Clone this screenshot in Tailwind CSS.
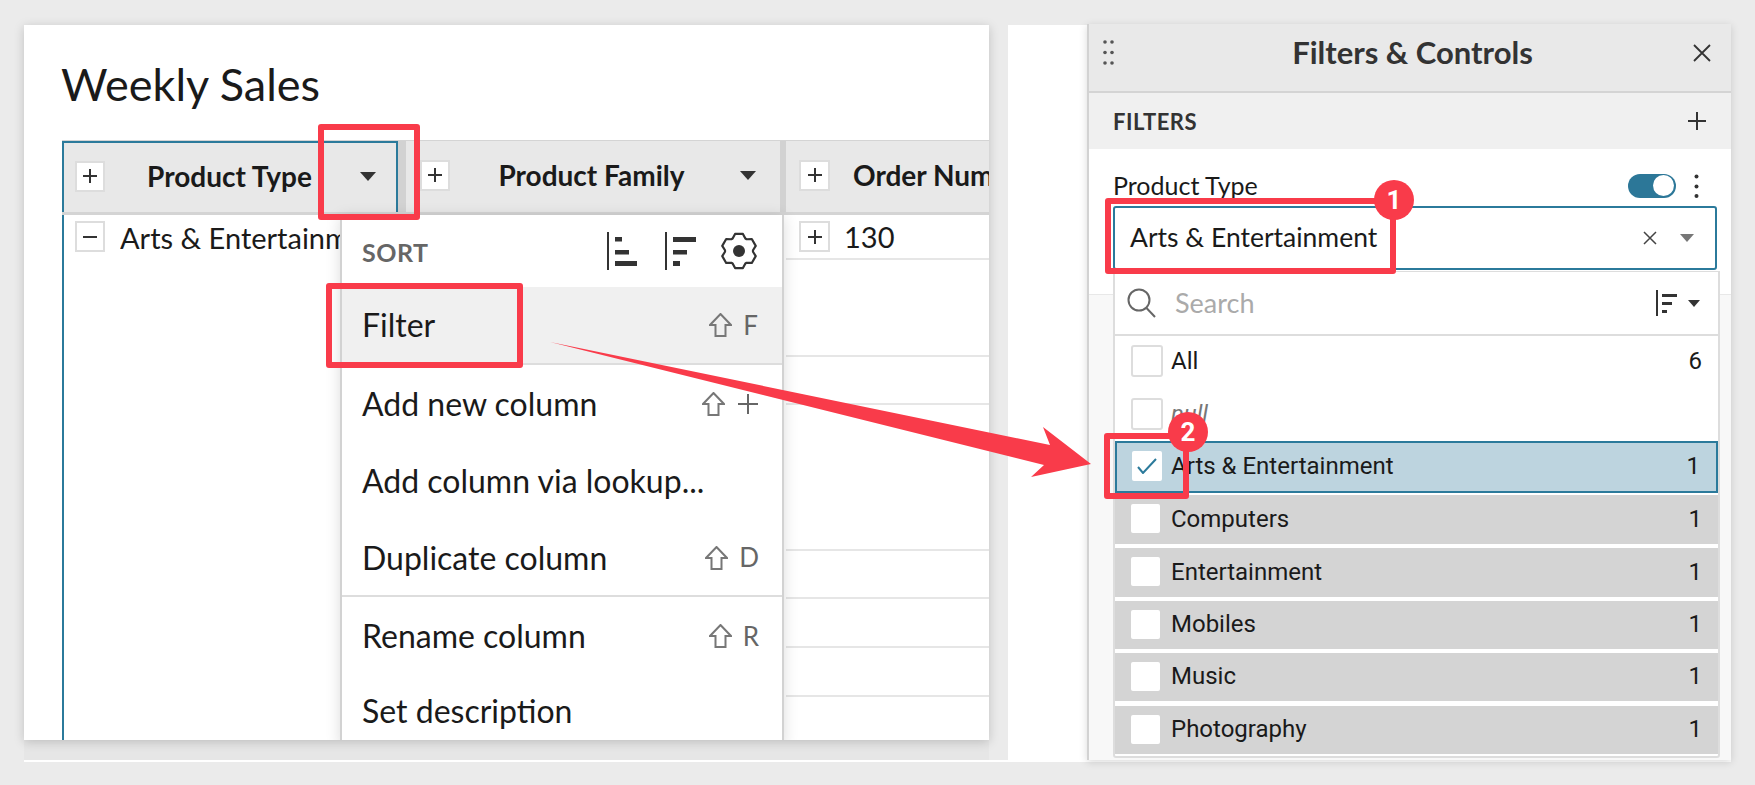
<!DOCTYPE html>
<html lang="en">
<head>
<meta charset="UTF-8" />
<title>Weekly Sales filter</title>
<script src="https://cdn.jsdelivr.net/npm/@tailwindcss/browser@4"></script>
</head>
<body class="bg-[#ebebeb] w-[1755px] h-[785px] overflow-hidden relative font-['Lato',sans-serif] text-[#1a1a1a]">
  <!-- screenshot base -->
  <div class="absolute left-[24px] top-[25px] w-[1707px] h-[737px] flex border-b-2 border-white bg-[#e6e6e6]">

    <!-- worksheet card -->
    <div class="w-[965px] h-[715px] bg-white shadow-[0_2px_10px_rgba(0,0,0,0.18)] pl-[38px] relative overflow-hidden shrink-0">
      <h1 class="h-[115px] pt-[27px] -ml-px text-[45px] leading-[64px] font-normal">Weekly Sales</h1>
      <div class="flex h-[600px]">
        <!-- column 1 -->
        <div class="w-[344px] shrink-0">
          <div class="h-[75px] flex border-t border-[#d4d4d4] border-b-[3px] bg-[#e8e8e8]">
            <div class="w-[336px] border-t-2 border-x-2 border-[#2b7a9b] flex items-center pl-[11px] pb-[3px]">
              <span class="w-[30px] h-[31px] bg-white border-2 border-[#ddd] flex items-center justify-center shrink-0"><svg width="16" height="16" viewBox="0 0 16 16"><path d="M8 1v14M1 8h14" stroke="#333" stroke-width="2"/></svg></span>
              <span class="ml-[42px] w-[165px] text-center text-[28px] font-bold whitespace-nowrap">Product Type</span>
              <svg class="ml-[48px]" width="16" height="9" viewBox="0 0 16 9"><path d="M0 0h16l-8 9z" fill="#333"/></svg>
            </div>
            <div class="w-[8px] bg-[#d2d2d2]"></div>
          </div>
          <div class="h-[525px] w-[336px] border-l-2 border-[#2b7a9b] pl-[11px] pt-[6px] flex items-start">
            <span class="w-[30px] h-[31px] bg-white border-2 border-[#ddd] flex items-center justify-center shrink-0"><svg width="16" height="16" viewBox="0 0 16 16"><path d="M1 8h14" stroke="#333" stroke-width="2"/></svg></span>
            <span class="ml-[15px] text-[29px] leading-[34px] whitespace-nowrap w-[221px] overflow-hidden">Arts &amp; Entertainment</span>
          </div>
        </div>
        <!-- column 2 -->
        <div class="w-[380px] shrink-0">
          <div class="h-[75px] flex border-t border-[#d4d4d4] border-b-[3px] bg-[#e8e8e8]">
            <div class="w-[374px] flex items-center pl-[14px] pb-[3px]">
              <span class="w-[30px] h-[31px] bg-white border-2 border-[#ddd] flex items-center justify-center shrink-0"><svg width="16" height="16" viewBox="0 0 16 16"><path d="M8 1v14M1 8h14" stroke="#333" stroke-width="2"/></svg></span>
              <span class="ml-[48px] w-[187px] text-center text-[28px] font-bold whitespace-nowrap">Product Family</span>
              <svg class="ml-[55px]" width="16" height="9" viewBox="0 0 16 9"><path d="M0 0h16l-8 9z" fill="#333"/></svg>
            </div>
            <div class="w-[6px] bg-[#d2d2d2]"></div>
          </div>
        </div>
        <!-- column 3 -->
        <div class="w-[203px] shrink-0 overflow-hidden">
          <div class="h-[75px] flex items-center border-t border-[#d4d4d4] border-b-[3px] bg-[#e8e8e8] pl-[13px] pb-[3px] whitespace-nowrap">
            <span class="w-[31px] h-[31px] bg-white border-2 border-[#ddd] flex items-center justify-center shrink-0"><svg width="16" height="16" viewBox="0 0 16 16"><path d="M8 1v14M1 8h14" stroke="#333" stroke-width="2"/></svg></span>
            <span class="ml-[23px] text-[28px] font-bold">Order Number</span>
          </div>
          <div class="h-[45px] flex items-center pl-[13px] border-b-2 border-[#e6e6e6]">
            <span class="w-[31px] h-[31px] bg-white border-2 border-[#ddd] flex items-center justify-center shrink-0"><svg width="16" height="16" viewBox="0 0 16 16"><path d="M8 1v14M1 8h14" stroke="#333" stroke-width="2"/></svg></span>
            <span class="ml-[14px] text-[29px]">130</span>
          </div>
          <div class="h-[97px] border-b-2 border-[#e6e6e6]"></div>
          <div class="h-[48px] border-b-2 border-[#e6e6e6]"></div>
          <div class="h-[146px] border-b-2 border-[#e6e6e6]"></div>
          <div class="h-[48px] border-b-2 border-[#e6e6e6]"></div>
          <div class="h-[49px] border-b-2 border-[#e6e6e6]"></div>
          <div class="h-[49px] border-b-2 border-[#e6e6e6]"></div>
        </div>
      </div>

      <!-- column menu -->
      <div class="absolute left-[316px] top-[190px] w-[444px] h-[530px] bg-white border-x-2 border-[#d2d2d2] shadow-[0_2px_14px_rgba(0,0,0,0.14)] text-[32px]">
        <div class="h-[72px] flex items-center pl-[20px] pr-[23px]">
          <span class="mt-[4px] text-[25px] font-bold text-[#666] tracking-[0.5px] flex-1">SORT</span>
          <svg width="30" height="38" viewBox="0 0 30 38" fill="#333"><rect x="0" y="0" width="2" height="38"/><rect x="8" y="5" width="7" height="4.5"/><rect x="8" y="18" width="14" height="4.5"/><rect x="8" y="29" width="22" height="5"/></svg>
          <svg class="ml-[28px]" width="31" height="38" viewBox="0 0 31 38" fill="#333"><rect x="0" y="0" width="2" height="38"/><rect x="8" y="5" width="23" height="5"/><rect x="8" y="18" width="14" height="4.5"/><rect x="8" y="29" width="7" height="5"/></svg>
          <svg class="ml-[23px]" width="40" height="40" viewBox="-20 -20 40 40"><polygon points="-6.36,-12.47 -3.94,-17.05 3.94,-17.05 6.36,-12.47 7.63,-11.74 12.8,-11.94 16.74,-5.12 13.98,-0.73 13.98,0.73 16.74,5.12 12.8,11.94 7.63,11.74 6.36,12.47 3.94,17.05 -3.94,17.05 -6.36,12.47 -7.63,11.74 -12.8,11.94 -16.74,5.12 -13.98,0.73 -13.98,-0.73 -16.74,-5.12 -12.8,-11.94 -7.63,-11.74" fill="none" stroke="#333" stroke-width="2.2" stroke-linejoin="round"/><circle r="6" fill="#333"/></svg>
        </div>
        <div class="h-[78px] flex items-center pl-[20px] pr-[24px] bg-[#f0f0f0] border-b-2 border-[#ddd]">
          <span class="flex-1">Filter</span>
          <svg width="23" height="24" viewBox="0 0 23 24"><path d="M11.5 1 22 12h-5.500v11h-10V12H1z" fill="none" stroke="#777" stroke-width="2"/></svg>
          <span class="ml-[11px] text-[26px] text-[#666]">F</span>
        </div>
        <div class="h-[77px] flex items-center pl-[20px] pr-[24px]">
          <span class="flex-1">Add new column</span>
          <svg width="23" height="24" viewBox="0 0 23 24"><path d="M11.500 1 22 12h-5.500v11h-10V12H1z" fill="none" stroke="#777" stroke-width="2"/></svg>
          <svg class="ml-[13px]" width="20" height="20" viewBox="0 0 20 20"><path d="M10 0v20M0 10h20" stroke="#666" stroke-width="2"/></svg>
        </div>
        <div class="h-[78px] flex items-center pl-[20px] pr-[24px]">
          <span class="flex-1">Add column via lookup...</span>
        </div>
        <div class="h-[77px] flex items-center pl-[20px] pr-[23px] border-b-2 border-[#ddd]">
          <span class="flex-1">Duplicate column</span>
          <svg width="23" height="24" viewBox="0 0 23 24"><path d="M11.500 1 22 12h-5.500v11h-10V12H1z" fill="none" stroke="#777" stroke-width="2"/></svg>
          <span class="ml-[11px] text-[26px] text-[#666]">D</span>
        </div>
        <div class="h-[78px] flex items-center pl-[20px] pr-[23px]">
          <span class="flex-1">Rename column</span>
          <svg width="23" height="24" viewBox="0 0 23 24"><path d="M11.500 1 22 12h-5.500v11h-10V12H1z" fill="none" stroke="#777" stroke-width="2"/></svg>
          <span class="ml-[11px] text-[26px] text-[#666]">R</span>
        </div>
        <div class="h-[72px] flex items-center pl-[20px] pr-[25px]">
          <span class="flex-1">Set description</span>
        </div>
      </div>
    </div>

    <div class="w-[19px] bg-[#ebebeb] shrink-0"></div>
    <div class="w-[79px] bg-white shrink-0"></div>

    <!-- filters panel -->
    <div class="w-[644px] h-[736px] -mt-px flex flex-col bg-[#f8f8f8] border-l-2 border-[#d2d2d2] shadow-[0_2px_8px_rgba(0,0,0,0.15)]">
      <div class="h-[69px] shrink-0 bg-[#e9e9e9] border-b-2 border-[#d4d4d4] flex items-center pl-[14px] pr-[20px] pb-[10px]">
        <svg width="11" height="25" viewBox="0 0 11 25" fill="#555"><circle cx="2" cy="2" r="1.800"/><circle cx="9" cy="2" r="1.800"/><circle cx="2" cy="12.500" r="1.800"/><circle cx="9" cy="12.500" r="1.800"/><circle cx="2" cy="23" r="1.800"/><circle cx="9" cy="23" r="1.800"/></svg>
        <span class="flex-1 text-center text-[31px] font-bold text-[#333] pl-[18px]">Filters &amp; Controls</span>
        <svg width="18" height="18" viewBox="0 0 18 18"><path d="M1 1l16 16M17 1 1 17" stroke="#333" stroke-width="1.800"/></svg>
      </div>
      <div class="h-[56px] shrink-0 bg-[#f0f0f0] flex items-center pl-[24px] pr-[25px]">
        <span class="flex-1 text-[22px] font-bold text-[#333] tracking-[0.5px]">FILTERS</span>
        <svg width="18" height="18" viewBox="0 0 18 18"><path d="M9 0v18M0 9h18" stroke="#333" stroke-width="2"/></svg>
      </div>
      <div class="h-[146px] shrink-0 bg-white border-b border-[#e8e8e8] pl-[24px] pr-[32px] pt-[20px]">
        <div class="h-[33px] flex items-center">
          <span class="flex-1 text-[25px]">Product Type</span>
          <span class="w-[48px] h-[24px] rounded-full bg-[#2c7798] flex items-center justify-end pr-[2px]"><span class="w-[21px] h-[21px] rounded-full bg-white"></span></span>
          <svg class="ml-[18px]" width="5" height="24" viewBox="0 0 5 24" fill="#333"><circle cx="2.500" cy="2.500" r="2"/><circle cx="2.500" cy="12.500" r="2"/><circle cx="2.500" cy="22" r="2"/></svg>
        </div>
      </div>
      <div class="flex-1"></div>
    </div>
  </div>

  <!-- value input -->
  <div class="absolute left-[1113px] top-[206px] w-[604px] h-[64px] bg-white border-2 border-[#2b7a9b] rounded-[3px] flex items-center pl-[15px] pr-[21px]">
    <span class="flex-1 text-[26.5px]">Arts &amp; Entertainment</span>
    <svg width="14" height="14" viewBox="0 0 14 14"><path d="M1 1l12 12M13 1 1 13" stroke="#444" stroke-width="1.500"/></svg>
    <svg class="ml-[23px]" width="14" height="8" viewBox="0 0 14 8"><path d="M0 0h14L7 8z" fill="#777"/></svg>
  </div>

  <!-- value dropdown -->
  <div class="absolute left-[1113px] top-[271px] w-[607px] h-[487px] bg-white border-x-2 border-[#ddd] border-t border-b-2 rounded-b-[3px] font-['Roboto',sans-serif] text-[24px]">
    <div class="h-[64px] flex items-center pl-[12px] pr-[18px] border-b-2 border-[#ddd]">
      <svg width="30" height="30" viewBox="0 0 30 30" fill="none" stroke="#666" stroke-width="2"><circle cx="12" cy="12" r="10.500"/><path d="M19.500 20 28 29"/></svg>
      <span class="flex-1 ml-[18px] font-['Lato',sans-serif] text-[27px] text-[#aaa]">Search</span>
      <svg width="21" height="26" viewBox="0 0 21 26" fill="#333"><rect x="0" y="0" width="2" height="26"/><rect x="6" y="4" width="15" height="3"/><rect x="6" y="12" width="10" height="3"/><rect x="6" y="20" width="5" height="3"/></svg>
      <svg class="ml-[11px]" width="12" height="7" viewBox="0 0 12 7"><path d="M0 0h12L6 7z" fill="#333"/></svg>
    </div>
    <div class="h-[52px] flex items-center pl-[16px] pr-[16px] pb-[2px]">
      <span class="w-[32px] h-[32px] border-2 border-[#ddd] rounded-[3px] bg-white"></span>
      <span class="flex-1 ml-[8px]">All</span><span>6</span>
    </div>
    <div class="h-[53px] flex items-center pl-[16px] pr-[16px] pb-[2px]">
      <span class="w-[32px] h-[32px] border-2 border-[#ddd] rounded-[3px] bg-white"></span>
      <span class="flex-1 ml-[8px] italic text-[#777]">null</span>
    </div>
    <div class="h-[52px] flex items-center pl-[16px] pr-[16px] bg-[#bdd4df] border-2 border-[#2b7a9b] pb-[2px]">
      <span class="w-[30px] h-[30px] -ml-[1px] rounded-[2px] bg-white flex items-center justify-center"><svg width="20" height="16" viewBox="0 0 20 16"><path d="M1 9l5 6L19 1" fill="none" stroke="#2b7a9b" stroke-width="2"/></svg></span>
      <span class="flex-1 ml-[9px]">Arts &amp; Entertainment</span><span>1</span>
    </div>
    <div class="h-[49px] mt-[2px] flex items-center pl-[16px] pr-[16px] bg-[#d4d4d4] pb-[2px]">
      <span class="w-[29px] h-[29px] rounded-[2px] bg-white"></span>
      <span class="flex-1 ml-[11px]">Computers</span><span>1</span>
    </div>
    <div class="h-[49px] mt-[4px] flex items-center pl-[16px] pr-[16px] bg-[#d4d4d4] pb-[2px]">
      <span class="w-[29px] h-[29px] rounded-[2px] bg-white"></span>
      <span class="flex-1 ml-[11px]">Entertainment</span><span>1</span>
    </div>
    <div class="h-[48px] mt-[4px] flex items-center pl-[16px] pr-[16px] bg-[#d4d4d4] pb-[2px]">
      <span class="w-[29px] h-[29px] rounded-[2px] bg-white"></span>
      <span class="flex-1 ml-[11px]">Mobiles</span><span>1</span>
    </div>
    <div class="h-[48px] mt-[4px] flex items-center pl-[16px] pr-[16px] bg-[#d4d4d4] pb-[2px]">
      <span class="w-[29px] h-[29px] rounded-[2px] bg-white"></span>
      <span class="flex-1 ml-[11px]">Music</span><span>1</span>
    </div>
    <div class="h-[48px] mt-[5px] flex items-center pl-[16px] pr-[16px] bg-[#d4d4d4] pb-[2px]">
      <span class="w-[29px] h-[29px] rounded-[2px] bg-white"></span>
      <span class="flex-1 ml-[11px]">Photography</span><span>1</span>
    </div>
  </div>

  <!-- red annotations -->
  <div class="absolute left-[318px] top-[124px] w-[102px] h-[96px] border-[6px] border-[#f93b4a] rounded-[3px]"></div>
  <div class="absolute left-[326px] top-[283px] w-[197px] h-[85px] border-[6px] border-[#f93b4a] rounded-[3px]"></div>
  <div class="absolute left-[1105px] top-[198px] w-[291px] h-[76px] border-[6px] border-[#f93b4a] rounded-[3px]"></div>
  <div class="absolute left-[1104px] top-[433px] w-[85px] h-[66px] border-[6px] border-[#f93b4a] rounded-[3px]"></div>
  <svg class="absolute left-0 top-0" width="1755" height="785" viewBox="0 0 1755 785"><polygon points="550,342 1050,445 1043,427 1091,464 1031,477 1044,465" fill="#f93b4a"/></svg>
  <div class="absolute left-[1374px] top-[180px] w-[40px] h-[40px] rounded-full bg-[#f93b4a] text-white font-['Roboto',sans-serif] font-bold text-[26px] flex items-center justify-center">1</div>
  <div class="absolute left-[1168px] top-[412px] w-[40px] h-[40px] rounded-full bg-[#f93b4a] text-white font-['Roboto',sans-serif] font-bold text-[26px] flex items-center justify-center">2</div>
</body>
</html>
